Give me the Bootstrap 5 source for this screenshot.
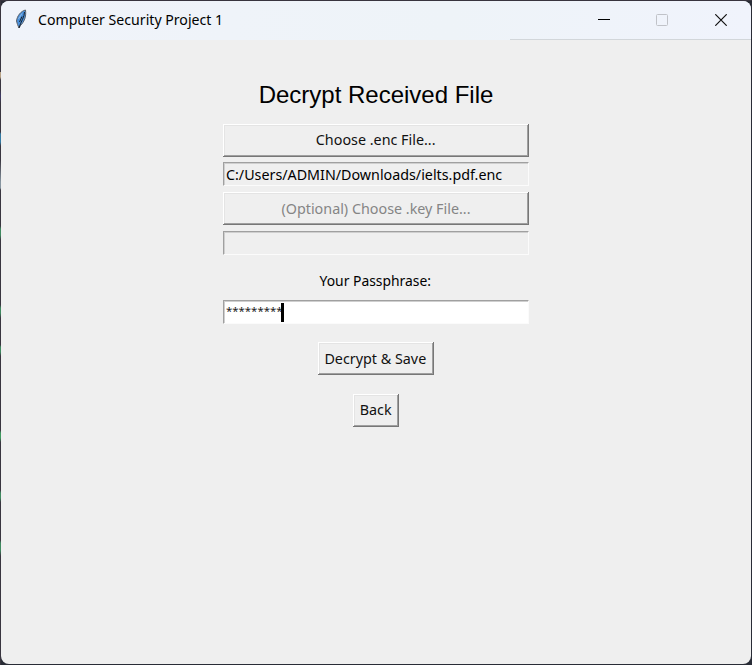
<!DOCTYPE html>
<html lang="en">
<head>
<meta charset="utf-8">
<title>Computer Security Project 1</title>
<link href="https://cdn.jsdelivr.net/npm/bootstrap@5.3.0/dist/css/bootstrap.min.css" rel="stylesheet">
<style>
body{height:665px;background:linear-gradient(#39353f,#37333d) 0 0/100% 1px no-repeat,linear-gradient(#39353f 72px,#b7a184 72px 77px,#39353f 80px 90px,#3f3b68 96px,#39353f 103px 132px,#347aa3 134px 142px,#39353f 146px 160px,#8795a0 182px 188px,#39353f 190px 226px,#3f8a60 229px 235px,#39353f 240px 305px,#3f8a60 308px 313px,#39353f 318px 345px,#3f8a60 347px 352px,#39353f 356px 430px,#3f9a60 433px 438px,#39353f 442px 490px,#3f8a60 493px 498px,#39353f 502px 540px,#3f8a60 543px 550px,#39353f 556px) 0 0/1px 100% no-repeat,#292c36;font-family:"Noto Sans","Open Sans",sans-serif;color:#000;font-size:15px;line-height:21px;padding:1px}
.win{height:663px;background:#efefef;border-radius:8px}
.titlebar{height:39px;background:linear-gradient(90deg,#f0f3fa,#eef3f8 60%,#f0f3fc)}
.titlebar .feather{margin-left:12px;width:16px;height:22px;margin-top:-3px}
.win-title{margin:-2px 0 0 9px}
.ctl{width:58.5px;height:36px;padding:0;border:0;background:none;line-height:1}
.ctls{height:39px;width:241px;padding-right:1px;border-bottom:1px solid #d2d6da}
.form-col{width:306px;padding-top:40px}
h1{font:24px/30px "Liberation Sans",Arial,sans-serif;margin:0 0 14px}
.tk-btn{height:33px;padding:0 0 1px;border:0;border-radius:0;background:#efefef;color:#111;font-size:15px;line-height:31px;box-shadow:inset -1px -1px #777,inset 1px 1px #fff,inset -2px -2px #a0a0a0,inset 2px 2px #e4e4e4}
.tk-btn:disabled{color:#858585;background:#efefef;opacity:1}
.tk-btn.raised-text{line-height:29px;padding-bottom:3px}
.tk-in{height:24px;border:1px solid;border-color:#a0a0a0 #fbfbfb #fbfbfb #a0a0a0;box-shadow:inset 1px 1px #cfcfcf;line-height:23px;padding-left:2px}
.gap-a{margin-top:5px}.gap-b{margin-top:6px}
.pass-label{margin:15px 0 9px;padding-right:1px}
.s{display:inline-block;white-space:nowrap;transform:scaleX(.955)}
.left{transform-origin:0 50%}
.tk-in .s{transform:scaleX(.952)}
.win-title .s{transform:scaleX(.941)}
.pass-label .s{transform:scaleX(.925)}
.tk-in .stars{font-size:11.4px;color:#222;transform:none;line-height:20px;padding-bottom:3px}
.caret{width:3px;height:19px;background:#000;margin-left:-2px}
.save{width:116px;margin-top:18px}.back{width:46px;margin-top:19px}
.save .s{margin:0 -3px 0 -5px}
</style>
<script src="https://cdn.jsdelivr.net/npm/bootstrap@5.3.0/dist/js/bootstrap.bundle.min.js"></script>
</head>
<body class="overflow-hidden">
<main class="win overflow-hidden">
<header class="titlebar d-flex align-items-center">
<svg class="feather" viewBox="0 0 16 22"><path d="M12.500 2C8 3 4 8 3.500 13L4.500 16.500 6 20 7.500 17.500C11 14 13.500 9 12.500 2Z" fill="#4a90dc" stroke="#5a5f68"/><path d="M11.500 4C11.500 9 8 13 6 20M9 8.500L6.500 14" fill="none" stroke="#16202c"/><path d="M5.500 11l3.500-5.500" stroke="#8fb9e4"/></svg>
<span class="win-title"><span class="s left">Computer Security Project 1</span></span>
<div class="ctls d-flex ms-auto">
<button class="ctl ms-auto" aria-label="Minimize"><svg width="12" height="12" viewBox="0 0 12 12"><path d="M0 5.500h12" stroke="#000"/></svg></button>
<button class="ctl" aria-label="Maximize" disabled><svg width="12" height="12" viewBox="0 0 12 12"><rect x=".5" y=".5" width="11" height="11" rx="1" fill="none" stroke="#c0c2c8"/></svg></button>
<button class="ctl" aria-label="Close"><svg width="12" height="12" viewBox="0 0 12 12"><path d="M.3.3l11.400 11.400M11.700.3L.3 11.700" stroke="#111" stroke-width="1.2"/></svg></button>
</div>
</header>
<div class="form-col mx-auto d-flex flex-column">
<h1 class="text-center">Decrypt Received File</h1>
<button class="btn tk-btn raised-text w-100"><span class="s">Choose .enc File...</span></button>
<div class="tk-in gap-a"><span class="s left">C:/Users/ADMIN/Downloads/ielts.pdf.enc</span></div>
<button class="btn tk-btn w-100 gap-b" disabled><span class="s">(Optional) Choose .key File...</span></button>
<div class="tk-in gap-b"></div>
<div class="text-center pass-label"><span class="s">Your Passphrase:</span></div>
<div class="tk-in bg-white d-flex align-items-center"><span class="s left stars">*********</span><span class="caret"></span></div>
<button class="btn tk-btn save mx-auto"><span class="s">Decrypt &amp; Save</span></button>
<button class="btn tk-btn raised-text back mx-auto"><span class="s">Back</span></button>
</div>
</main>
</body>
</html>
